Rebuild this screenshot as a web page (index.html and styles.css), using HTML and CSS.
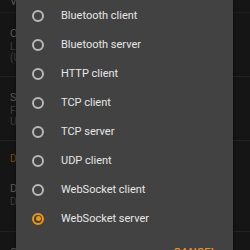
FILE: index.html
```html
<!DOCTYPE html>
<html>
<head>
<meta charset="utf-8">
<link rel="stylesheet" href="styles.css">
</head>
<body>
<div class="settings">
  <div class="pref top"><div class="title">Version</div></div>
  <div class="pref first">
    <div class="title">Options</div>
    <div class="summary">Local settings</div>
    <div class="summary">(Use defaults)</div>
  </div>
  <div class="pref">
    <div class="title">Server</div>
    <div class="summary">Format</div>
    <div class="summary">Use</div>
  </div>
  <div class="category">Data</div>
  <div class="pref">
    <div class="title">Data</div>
    <div class="summary">Default</div>
  </div>
  <div class="pref">
    <div class="title">Connection</div>
    <div class="summary">WebSocket</div>
  </div>
</div>

<div class="dialog">
  <ul class="choices">
    <li class="choice"><span class="radio"></span><span class="label">Bluetooth client</span></li>
    <li class="choice"><span class="radio"></span><span class="label">Bluetooth server</span></li>
    <li class="choice"><span class="radio"></span><span class="label">HTTP client</span></li>
    <li class="choice"><span class="radio"></span><span class="label">TCP client</span></li>
    <li class="choice"><span class="radio"></span><span class="label">TCP server</span></li>
    <li class="choice"><span class="radio"></span><span class="label">UDP client</span></li>
    <li class="choice"><span class="radio"></span><span class="label">WebSocket client</span></li>
    <li class="choice"><span class="radio checked"></span><span class="label">WebSocket server</span></li>
  </ul>
  <div class="actions"><span class="btn">CANCEL</span></div>
</div>
</body>
</html>
```
FILE: styles.css
```css
html, body {
  margin: 0;
  padding: 0;
  width: 250px;
  height: 250px;
  overflow: hidden;
  background: #151515;
  font-family: Roboto, "Noto Sans", sans-serif;
}
.settings {
  display: flex;
  flex-direction: column;
}
.pref {
  padding: 13px 10px 10px 10px;
  border-bottom: 1px solid #222;
  height: 40px;
  box-sizing: content-box;
}
.pref.top {
  height: 10px;
  padding: 0 10px 8px 10px;
  margin-top: -6px;
  border-bottom: 1px solid #1e1e1e;
}
.title {
  font-size: 11px;
  line-height: 15px;
  color: #5c5c5c;
}
.summary {
  font-size: 10px;
  line-height: 11px;
  color: #3e3e3e;
}
.category {
  font-size: 10px;
  color: #7a4d0c;
  padding: 12px 10px 4px;
}
.dialog {
  position: absolute;
  left: 16px;
  top: 0;
  width: 217px;
  height: 270px;
  background: #424242;
  box-shadow: 0 0 4px rgba(0,0,0,0.5);
}
.choices {
  list-style: none;
  margin: 0;
  padding: 1px 0 0 0;
}
.choice {
  height: 29px;
  display: flex;
  align-items: center;
}
.radio {
  width: 8px;
  height: 8px;
  border: 2px solid #b8b8b8;
  border-radius: 50%;
  margin-left: 16px;
  box-sizing: content-box;
  position: relative;
  flex: none;
}
.radio.checked {
  border-color: #f0960e;
}
.radio.checked::after {
  content: "";
  position: absolute;
  left: 1.5px;
  top: 1.5px;
  width: 5px;
  height: 5px;
  border-radius: 50%;
  background: #f0960e;
}
.label {
  margin-left: 17px;
  font-size: 11px;
  color: #e6e6e6;
}
.actions {
  display: flex;
  justify-content: flex-end;
  padding: 13px 16px 0 0;
}
.btn {
  font-size: 11px;
  font-weight: 500;
  color: #f0960e;
  letter-spacing: 0.3px;
}
```
